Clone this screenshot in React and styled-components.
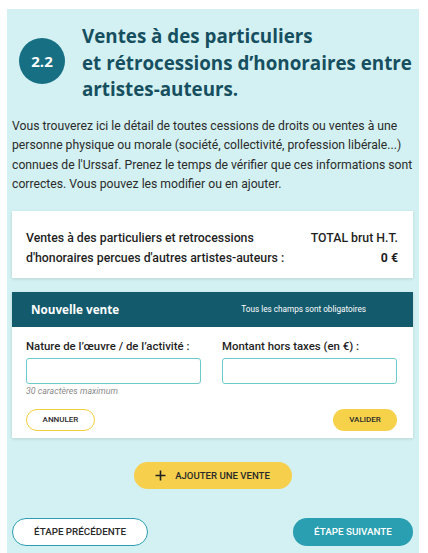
import React from "react";
import styled, { createGlobalStyle } from "styled-components";

const GlobalStyle = createGlobalStyle`
  body {
    margin: 0;
    background: #fff;
    font-family: Roboto, "Liberation Sans", sans-serif;
  }
`;

const Page = styled.div`
  padding: 9px 9px 0 7px;
  height: 553px;
  box-sizing: border-box;
  overflow: hidden;
`;

const Panel = styled.section`
  background: #d3f1f2;
  height: 100%;
  padding: 14px 6px 0 5px;
  box-sizing: border-box;
`;

const Heading = styled.div`
  display: flex;
  align-items: flex-start;
  gap: 17px;
  padding-left: 7px;
`;

const StepBadge = styled.div`
  flex: none;
  margin-top: 15px;
  width: 46px;
  height: 46px;
  border-radius: 50%;
  background: #176f84;
  color: #fff;
  display: flex;
  align-items: center;
  justify-content: center;
  font-family: "Open Sans", sans-serif;
  font-weight: 700;
  font-size: 15px;
`;

const Title = styled.h2`
  margin: 0;
  font-family: "Open Sans", sans-serif;
  font-weight: 700;
  font-size: 18.8px;
  line-height: 26.5px;
  color: #164f60;
  white-space: nowrap;
`;

const Intro = styled.p`
  margin: 14px 0 0;
  font-size: 12.2px;
  line-height: 19.6px;
  color: #2b2b2b;
`;

const Card = styled.div`
  background: #fff;
  box-shadow: 0 1px 3px rgba(0, 0, 0, 0.12);
`;

const TotalCard = styled(Card)`
  margin-top: 16px;
  display: flex;
  justify-content: space-between;
  padding: 17px 15px 10px 14px;
  font-size: 12.3px;
  line-height: 20px;
  color: #1f1f1f;
  font-weight: 500;
  white-space: nowrap;
`;

const TotalRight = styled.div`
  text-align: right;
`;

const Amount = styled.div`
  font-weight: 700;
`;

const FormCard = styled(Card)`
  margin-top: 14px;
`;

const FormHeader = styled.div`
  background: #135a6c;
  height: 35px;
  display: flex;
  align-items: center;
  justify-content: space-between;
  padding: 0 47px 0 19px;
  color: #fff;
`;

const FormTitle = styled.span`
  font-family: "Open Sans", sans-serif;
  font-weight: 700;
  font-size: 11.7px;
`;

const FormNote = styled.span`
  font-size: 8.2px;
`;

const FormBody = styled.div`
  padding: 12px 16px 7px 14px;
`;

const Fields = styled.div`
  display: grid;
  grid-template-columns: 1fr 1fr;
  column-gap: 21px;
`;

const Field = styled.label`
  display: flex;
  flex-direction: column;
  min-width: 0;
`;

const Label = styled.span`
  font-size: 11.4px;
  font-weight: 500;
  color: #1f1f1f;
  line-height: 15px;
  margin-bottom: 4px;
  white-space: nowrap;
`;

const Input = styled.input`
  width: 100%;
  min-width: 0;
  height: 26px;
  box-sizing: border-box;
  border: 1.5px solid #6ccacb;
  border-radius: 3px;
  background: #fff;
  outline: none;
`;

const Hint = styled.span`
  font-size: 8.8px;
  font-style: italic;
  color: #8a8a8a;
  margin-top: 2px;
`;

const Actions = styled.div`
  display: flex;
  justify-content: space-between;
  margin-top: 13px;
`;

const Pill = styled.button`
  height: 22px;
  border-radius: 11px;
  font-family: Roboto, sans-serif;
  font-weight: 500;
  font-size: 8px;
  text-transform: uppercase;
  color: #2a2a2a;
  padding: 0;
  width: ${(p) => p.$w}px;
  border: ${(p) => (p.$outline ? "1.5px solid #f2cf3e" : "none")};
  background: ${(p) => (p.$outline ? "#fff" : "#f6d14a")};
`;

const AddRow = styled.div`
  display: flex;
  justify-content: center;
  margin-top: 24px;
`;

const AddButton = styled.button`
  display: flex;
  align-items: center;
  gap: 9px;
  height: 27px;
  width: 158px;
  justify-content: center;
  border: none;
  border-radius: 14px;
  background: #f6d04c;
  font-family: Roboto, sans-serif;
  font-weight: 500;
  font-size: 9.6px;
  color: #2a2a2a;
  text-transform: uppercase;
  padding: 0;
`;

const Nav = styled.div`
  display: flex;
  justify-content: space-between;
  margin-top: 29px;
`;

const NavButton = styled.button`
  height: 28px;
  border-radius: 14px;
  font-family: Roboto, sans-serif;
  font-weight: 500;
  font-size: 9.8px;
  text-transform: uppercase;
  padding: 0;
  width: ${(p) => p.$w}px;
  border: ${(p) => (p.$primary ? "none" : "1.5px solid #2b9fb0")};
  background: ${(p) => (p.$primary ? "#2a9fb1" : "#fff")};
  color: ${(p) => (p.$primary ? "#fff" : "#2a2a2a")};
`;

const PlusIcon = () => (
  <svg width="11" height="11" viewBox="0 0 11 11">
    <path d="M5.5 0.5v10M0.5 5.5h10" stroke="#222" strokeWidth="1.6" />
  </svg>
);

export default function App() {
  return (
    <Page>
      <GlobalStyle />
      <Panel>
        <Heading>
          <StepBadge>2.2</StepBadge>
          <Title>
            Ventes à des particuliers
            <br />
            et rétrocessions d’honoraires entre
            <br />
            artistes-auteurs.
          </Title>
        </Heading>
        <Intro>
          Vous trouverez ici le détail de toutes cessions de droits ou ventes à une
          personne physique ou morale (société, collectivité, profession libérale...)
          connues de l'Urssaf. Prenez le temps de vérifier que ces informations sont
          correctes. Vous pouvez les modifier ou en ajouter.
        </Intro>
        <TotalCard>
          <div>
            Ventes à des particuliers et retrocessions
            <br />
            d'honoraires percues d'autres artistes-auteurs :
          </div>
          <TotalRight>
            <div>TOTAL brut H.T.</div>
            <Amount>0 €</Amount>
          </TotalRight>
        </TotalCard>
        <FormCard>
          <FormHeader>
            <FormTitle>Nouvelle vente</FormTitle>
            <FormNote>Tous les champs sont obligatoires</FormNote>
          </FormHeader>
          <FormBody>
            <Fields>
              <Field>
                <Label>Nature de l’œuvre / de l’activité :</Label>
                <Input />
                <Hint>30 caractères maximum</Hint>
              </Field>
              <Field>
                <Label>Montant hors taxes (en €) :</Label>
                <Input />
              </Field>
            </Fields>
            <Actions>
              <Pill $outline $w={69}>Annuler</Pill>
              <Pill $w={64}>Valider</Pill>
            </Actions>
          </FormBody>
        </FormCard>
        <AddRow>
          <AddButton>
            <PlusIcon />
            Ajouter une vente
          </AddButton>
        </AddRow>
        <Nav>
          <NavButton $w={136}>Étape précédente</NavButton>
          <NavButton $primary $w={120}>Étape suivante</NavButton>
        </Nav>
      </Panel>
    </Page>
  );
}
